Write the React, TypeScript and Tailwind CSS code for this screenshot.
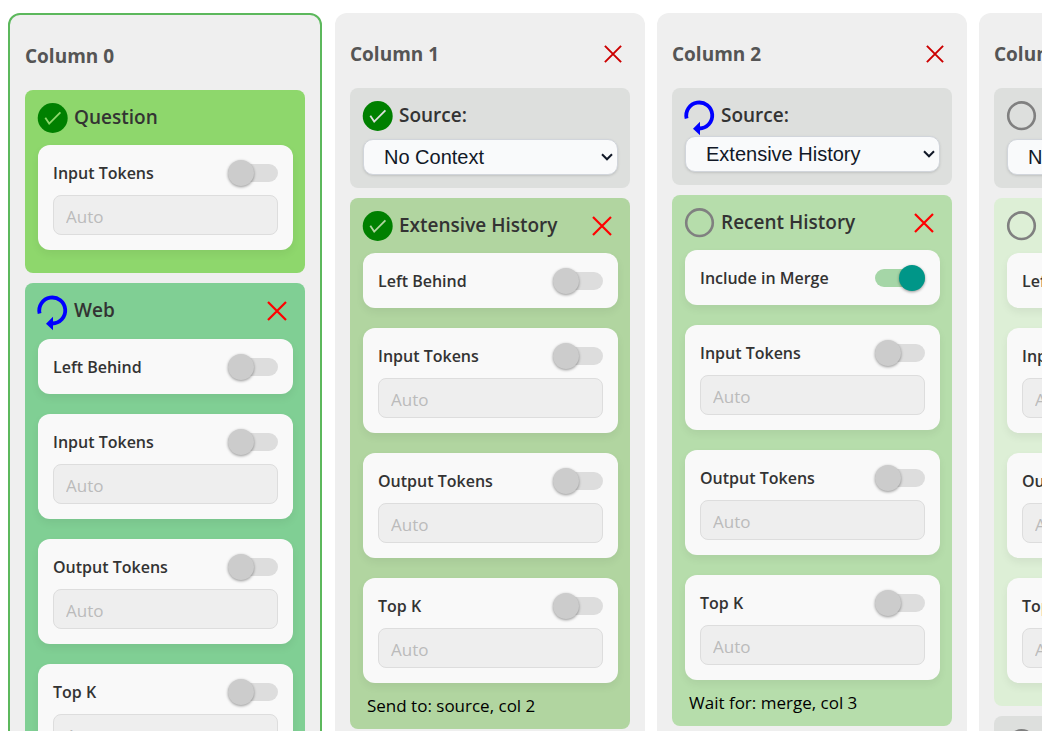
import { useId, useState } from "react";

type Status = "done" | "running" | "idle";

type Field = { label: string; kind: "toggle" | "auto"; on?: boolean };

type Block = {
  title: string;
  status: Status;
  tone: string;
  closable?: boolean;
  fields?: Field[];
  source?: string;
  note?: string;
};

type ColumnData = { title: string; active?: boolean; blocks: Block[] };

const LEFT: Field = { label: "Left Behind", kind: "toggle" };
const INPUT: Field = { label: "Input Tokens", kind: "auto" };
const OUTPUT: Field = { label: "Output Tokens", kind: "auto" };
const TOPK: Field = { label: "Top K", kind: "auto" };

const GRAY = "bg-[#dddfdd]";

const COLUMNS: ColumnData[] = [
  {
    title: "Column 0",
    active: true,
    blocks: [
      { title: "Question", status: "done", tone: "bg-[#8ed76c] text-[#8ed76c]", fields: [INPUT] },
      {
        title: "Web",
        status: "running",
        tone: "bg-[#80cf94]",
        closable: true,
        fields: [LEFT, INPUT, OUTPUT, TOPK],
      },
    ],
  },
  {
    title: "Column 1",
    blocks: [
      { title: "Source:", status: "done", tone: "bg-[#dddfdd] text-[#dddfdd]", source: "No Context" },
      {
        title: "Extensive History",
        status: "done",
        tone: "bg-[#b1d5a0] text-[#b1d5a0]",
        closable: true,
        fields: [LEFT, INPUT, OUTPUT, TOPK],
        note: "Send to: source, col 2",
      },
    ],
  },
  {
    title: "Column 2",
    blocks: [
      { title: "Source:", status: "running", tone: GRAY, source: "Extensive History" },
      {
        title: "Recent History",
        status: "idle",
        tone: "bg-[#b6ddab]",
        closable: true,
        fields: [{ label: "Include in Merge", kind: "toggle", on: true }, INPUT, OUTPUT, TOPK],
        note: "Wait for: merge, col 3",
      },
    ],
  },
  {
    title: "Column 3",
    blocks: [
      { title: "Source:", status: "idle", tone: GRAY, source: "No Context" },
      {
        title: "Recent History",
        status: "idle",
        tone: "bg-[#ddefd6]",
        closable: true,
        fields: [LEFT, INPUT, OUTPUT, TOPK],
      },
      { title: "Merge", status: "idle", tone: GRAY, source: "No Context" },
    ],
  },
];

function StatusIcon({ status }: { status: Status }) {
  return (
    <svg viewBox="0 0 30 30" className="size-[30px] shrink-0 overflow-visible" fill="none" aria-hidden="true">
      {status === "done" && (
        <>
          <circle cx="14.7" cy="15" r="15" fill="#008000" />
          <path d="M7.3 14.8 11.2 20.6 22.4 9.4" stroke="currentColor" strokeWidth="1.8" />
        </>
      )}
      {status === "running" && (
        <>
          <path d="M1.6 17.5A13 13 0 1 1 14.3 27.5" stroke="#0000ff" strokeWidth="3.8" />
          <path d="M8 27.8 15 20.8V34.3Z" fill="#0000ff" />
        </>
      )}
      {status === "idle" && <circle cx="14.5" cy="14.7" r="13.3" stroke="#808080" strokeWidth="2.6" />}
    </svg>
  );
}

function Cross({ label, className }: { label: string; className: string }) {
  return (
    <button type="button" aria-label={label} className={`flex cursor-pointer items-center ${className}`}>
      <svg viewBox="0 0 20 20" className="size-full" fill="none" stroke="currentColor" strokeWidth="2.2" aria-hidden="true">
        <path d="M1 1 19 19M19 1 1 19" />
      </svg>
    </button>
  );
}

function FieldCard({ field }: { field: Field }) {
  const id = useId();
  const [on, setOn] = useState(field.on ?? false);
  return (
    <div className="flex flex-col gap-[10px] rounded-xl bg-[#f9f9f9] p-[15px] shadow-[0_4px_8px_rgba(0,0,0,0.06)]">
      <div className="flex h-[25px] items-center justify-between">
        <label htmlFor={id} className="text-[16px] leading-6 font-semibold text-[#333]">
          {field.label}
        </label>
        <input
          id={id}
          type="checkbox"
          role="switch"
          checked={on}
          onChange={(e) => setOn(e.target.checked)}
          className="flex h-[18px] w-[50px] cursor-pointer appearance-none items-center rounded-full bg-[#ddd] before:size-[26px] before:shrink-0 before:rounded-full before:bg-[#ccc] before:shadow-[0_1px_3px_rgba(0,0,0,0.4)] checked:justify-end checked:bg-[#a5d6a7] checked:before:bg-[#009688]"
        />
      </div>
      {field.kind === "auto" && (
        <input
          type="text"
          placeholder="Auto"
          aria-label={`${field.label} value`}
          disabled={!on}
          className="h-10 w-full rounded-lg border border-[#ddd] bg-[#eee] px-3 pt-[2px] text-[17px] text-[#333] placeholder:text-[#bbb]"
        />
      )}
    </div>
  );
}

function SourceSelect({ id, value }: { id: string; value: string }) {
  return (
    <div className="grid items-center">
      <select
        id={id}
        defaultValue={value}
        className="col-start-1 row-start-1 h-9 w-full appearance-none rounded-[10px] border border-[#d1d5db] bg-[#f9fafb] pr-6 pl-5 font-['Liberation_Sans',sans-serif] text-[20px] leading-6 text-[#111827] shadow-sm"
      >
        <option>No Context</option>
        <option>Extensive History</option>
        <option>Recent History</option>
      </select>
      <svg
        viewBox="0 0 12 8"
        className="pointer-events-none col-start-1 row-start-1 mr-[5px] h-2 w-3 justify-self-end"
        fill="none"
        stroke="#111827"
        strokeWidth="2"
        aria-hidden="true"
      >
        <path d="M1 1.3 6 6.3 11 1.3" />
      </svg>
    </div>
  );
}

function BlockPanel({ block }: { block: Block }) {
  const id = useId();
  const isSource = block.source !== undefined;
  const running = block.status === "running";
  const gap = isSource ? (running ? "gap-[5px]" : "gap-2") : running ? "gap-[13px]" : "gap-3";
  const bottom = isSource ? "pb-[13px]" : block.note ? "pb-3" : "pb-[23px]";
  return (
    <section className={`flex flex-col rounded-lg pt-3 pr-3 pl-[13px] ${gap} ${bottom} ${block.tone}`}>
      <div className="flex h-[31px] items-center gap-[6px]">
        <StatusIcon status={block.status} />
        {isSource ? (
          <label htmlFor={id} className="flex-1 pb-[2px] text-[19px] leading-6 font-semibold text-[#333]">
            {block.title}
          </label>
        ) : (
          <h3 className="flex-1 pb-[2px] text-[19px] leading-6 font-semibold whitespace-nowrap text-[#333]">
            {block.title}
          </h3>
        )}
        {block.closable && <Cross label={`Remove ${block.title}`} className="mr-[6px] size-5 text-[#ff0000]" />}
      </div>
      {block.source !== undefined ? (
        <SourceSelect id={id} value={block.source} />
      ) : (
        <div className="flex flex-col gap-5">
          {block.fields?.map((f) => (
            <FieldCard key={f.label} field={f} />
          ))}
        </div>
      )}
      {block.note && <p className="px-1 text-[17px] leading-[22px] text-black">{block.note}</p>}
    </section>
  );
}

function Column({ column }: { column: ColumnData }) {
  return (
    <section
      className={`shrink-0 rounded-xl bg-[#efefef] p-[15px] ${
        column.active ? "mr-px w-[314px] border-2 border-[#5cb85c]" : "w-[310px]"
      }`}
    >
      <header className="mb-2 flex h-[52px] items-center justify-between">
        <h2 className="text-[19px] leading-6 font-bold text-[#555]">{column.title}</h2>
        {!column.active && <Cross label={`Remove ${column.title}`} className="mr-2 size-[18px] text-[#cc0000]" />}
      </header>
      <div className="flex flex-col gap-[10px]">
        {column.blocks.map((b) => (
          <BlockPanel key={b.title} block={b} />
        ))}
      </div>
    </section>
  );
}

export default function App() {
  return (
    <main className="h-screen overflow-auto bg-white font-['Open_Sans','Noto_Sans',sans-serif] [scrollbar-width:none]">
      <div className="flex w-max gap-3 px-2 py-[13px]">
        {COLUMNS.map((c) => (
          <Column key={c.title} column={c} />
        ))}
      </div>
    </main>
  );
}
